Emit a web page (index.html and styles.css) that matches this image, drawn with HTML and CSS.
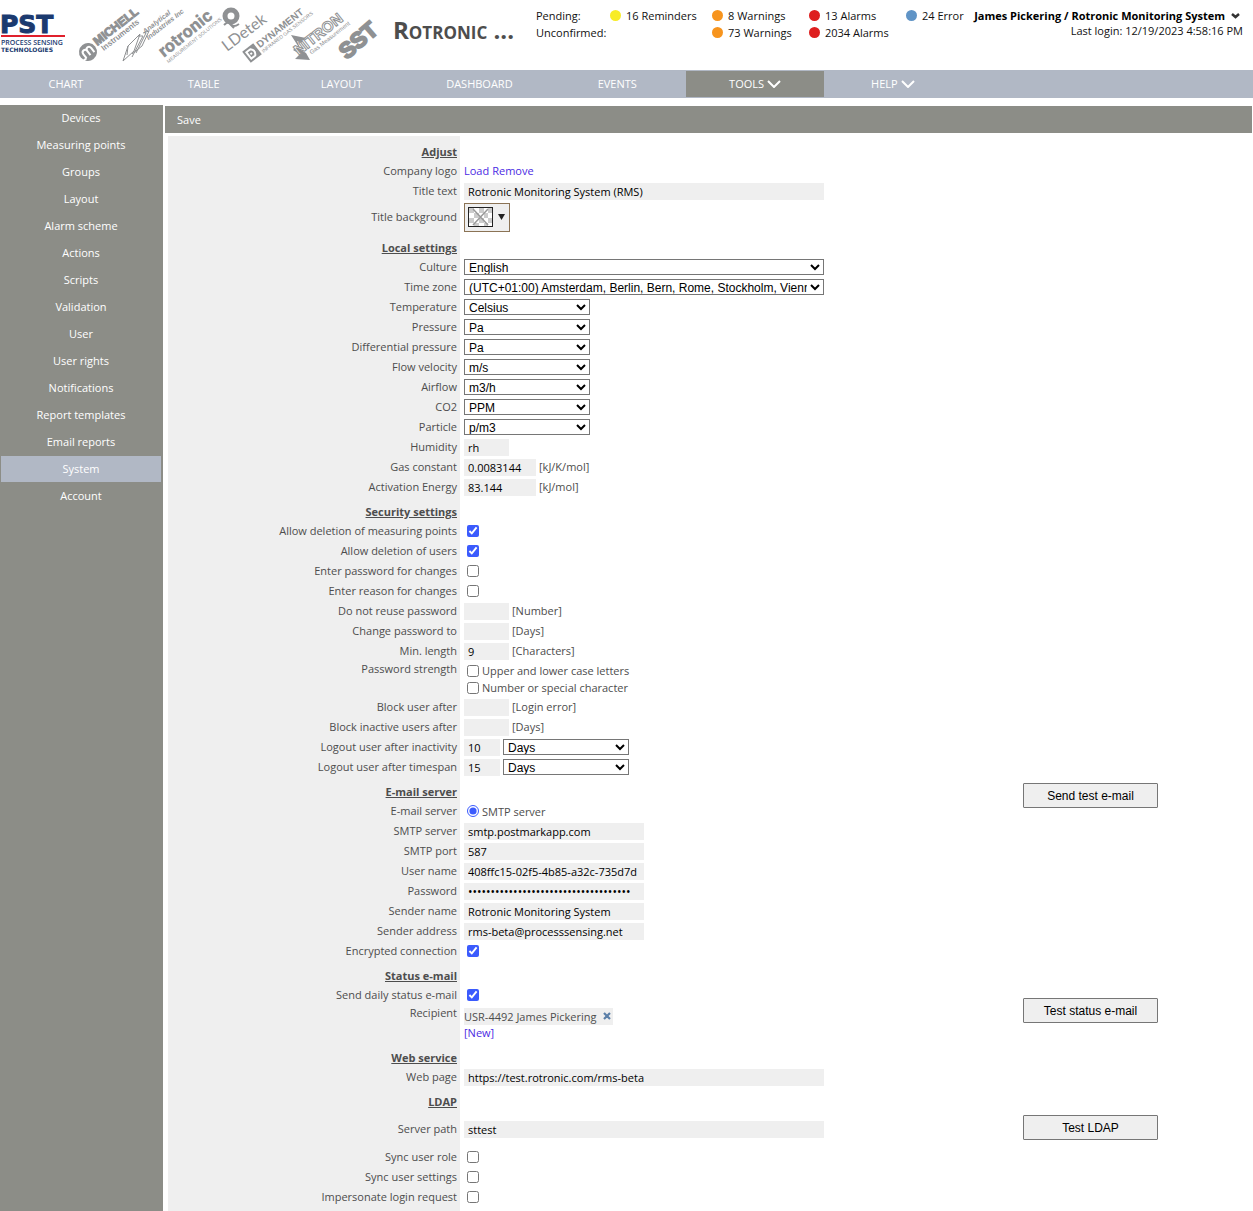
FILE: index.html
```html
<!DOCTYPE html>
<html lang="en">
<head>
    <meta charset="UTF-8">
    <meta name="viewport" content="width=device-width, initial-scale=1.0">
    <title>Rotronic Monitoring System</title>
    <link rel="stylesheet" href="styles.css">
</head>
<body>
    <header class="header">
        <svg class="brands" width="393" height="70" viewBox="0 0 393 70" role="img" aria-label="Process Sensing Technologies brands">
            <!-- PST -->
            <g class="pst">
                <text class="pst-name" x="0" y="33">PST</text>
                <rect class="pst-line" x="1" y="35" width="64" height="2"/>
                <text class="pst-sub" x="1" y="45">PROCESS SENSING</text>
                <text class="pst-tech" x="1" y="52">TECHNOLOGIES</text>
            </g>
            <!-- Michell -->
            <g transform="translate(88 52) rotate(-38)">
                <circle r="9"/>
                <path class="cut" d="M-5 4v-5q0-3 2.500-3T0-1v5M0-1q0-3 2.500-3T5-1v5M-9 4h4"/>
                <text class="heavy michell" x="11" y="1" font-size="12">MICHELL</text>
                <text class="heavy" x="13" y="9" font-size="8">Instruments</text>
            </g>
            <!-- Analytical Industries -->
            <path class="thin" d="M123 61l5-15 12-12-6 17zM128 46l-1 9M138 36h5l-11 21M143 33l6-2-7 15-10 8M146 33l-10 20"/>
            <g transform="translate(145 34) rotate(-38)">
                <text class="heavy italic" x="0" y="0" font-size="7">Analytical</text>
                <text class="heavy italic" x="-1" y="7" font-size="7">Industries Inc</text>
            </g>
            <!-- Rotronic -->
            <g transform="translate(164 58) rotate(-39)">
                <text class="rotronic" x="0" y="0" font-size="18">rotronic</text>
                <text x="0" y="7" font-size="5">MEASUREMENT SOLUTIONS</text>
            </g>
            <!-- LDetek -->
            <circle class="ring" cx="231" cy="16" r="6"/>
            <path class="wave" d="M224 25q5-5 7-1t8 0M228 22l6 6"/>
            <g transform="translate(227 52) rotate(-37)">
                <text class="light" x="0" y="0" font-size="16">LDetek</text>
            </g>
            <!-- Dynament -->
            <g transform="translate(252 53) rotate(-38)">
                <rect x="-7" y="-7" width="14" height="14"/>
                <path class="cut" d="M-4-4h5q4 4 0 8h-5zM-1-1v2"/>
                <text class="heavy" x="9" y="1" font-size="10">DYNAMENT</text>
                <text x="9" y="7" font-size="5">INFRARED GAS SENSORS</text>
            </g>
            <!-- Nitron -->
            <path d="M291 35l15 3-5 5-4-2 4 9 5 3 4 7-15-1 5-5-7-4 5-4z"/>
            <g transform="translate(301 54) rotate(-38)">
                <text class="nitron" x="-3" y="0" font-size="15">NITRON</text>
                <text x="8" y="7" font-size="6">Gas Measurement</text>
            </g>
            <!-- SST -->
            <g transform="translate(347 60) rotate(-41)">
                <text class="sst" x="0" y="0" font-size="22">SST</text>
            </g>
        </svg>

        <h1 class="title">Rotronic ...</h1>

        <div class="status">
            <span>Pending:</span>
            <span><i class="dot yellow"></i>16 Reminders</span>
            <span><i class="dot orange"></i>8 Warnings</span>
            <span><i class="dot red"></i>13 Alarms</span>
            <span><i class="dot blue"></i>24 Error</span>
            <span>Unconfirmed:</span>
            <span></span>
            <span><i class="dot orange"></i>73 Warnings</span>
            <span><i class="dot red"></i>2034 Alarms</span>
        </div>

        <div class="user">
            <button type="button" class="user-name">James Pickering / Rotronic Monitoring System
                <svg width="9" height="6" viewBox="0 0 9 6"><path d="M1 1l3.500 3L8 1" fill="none" stroke="#333" stroke-width="2.500"/></svg>
            </button>
            <div class="last-login">Last login: 12/19/2023 4:58:16 PM</div>
        </div>
    </header>

    <nav class="nav">
        <a href="#">CHART</a>
        <a href="#">TABLE</a>
        <a href="#">LAYOUT</a>
        <a href="#">DASHBOARD</a>
        <a href="#">EVENTS</a>
        <a href="#" class="active">TOOLS <svg width="14" height="8" viewBox="0 0 14 8"><path d="M1 1l6 6 6-6"/></svg></a>
        <a href="#">HELP <svg width="14" height="8" viewBox="0 0 14 8"><path d="M1 1l6 6 6-6"/></svg></a>
    </nav>

    <div class="page">
        <aside class="sidebar">
            <a href="#">Devices</a>
            <a href="#">Measuring points</a>
            <a href="#">Groups</a>
            <a href="#">Layout</a>
            <a href="#">Alarm scheme</a>
            <a href="#">Actions</a>
            <a href="#">Scripts</a>
            <a href="#">Validation</a>
            <a href="#">User</a>
            <a href="#">User rights</a>
            <a href="#">Notifications</a>
            <a href="#">Report templates</a>
            <a href="#">Email reports</a>
            <a href="#" class="active">System</a>
            <a href="#">Account</a>
        </aside>

        <main class="main">
            <div class="toolbar"><button type="submit" form="settings">Save</button></div>

            <form class="settings" id="settings">
                <section class="section">
                    <div class="rows">
                        <h2>Adjust</h2>
                        <div class="row"><span class="label">Company logo</span><div class="field links"><a href="#">Load</a> <a href="#">Remove</a></div></div>
                        <div class="row"><label class="label" for="title-text">Title text</label><div class="field"><input type="text" class="wide" id="title-text" value="Rotronic Monitoring System (RMS)"></div></div>
                        <div class="row color-row">
                            <label class="label" for="title-bg">Title background</label>
                            <div class="field">
                                <button type="button" class="color-picker" id="title-bg" aria-label="Title background">
                                    <svg width="25" height="20" viewBox="0 0 25 20">
                                        <rect x="1" y="1" width="23" height="18" fill="#fff"/>
                                        <path fill="#ccc" d="M1 1h5v5H1zM11 1h5v5h-5zM20 1h4v5h-4zM6 6h5v5H6zM16 6h4v5h-4zM1 11h5v5H1zM11 11h5v5h-5zM20 11h4v5h-4zM6 16h5v3H6zM16 16h4v3h-4z"/>
                                        <path fill="none" stroke="#999" stroke-width="1.500" d="M5 2l15 16M20 2L5 18"/>
                                        <rect x=".5" y=".5" width="24" height="19" fill="none" stroke="#222"/>
                                    </svg>
                                    <svg width="7" height="6" viewBox="0 0 7 6"><path d="M0 0h7L3.500 6z" fill="#222"/></svg>
                                </button>
                            </div>
                        </div>
                    </div>
                </section>

                <section class="section">
                    <div class="rows">
                        <h2>Local settings</h2>
                        <div class="row"><label class="label" for="culture">Culture</label><div class="field"><select class="wide" id="culture"><option>English</option></select></div></div>
                        <div class="row"><label class="label" for="time-zone">Time zone</label><div class="field"><select class="wide" id="time-zone"><option>(UTC+01:00) Amsterdam, Berlin, Bern, Rome, Stockholm, Vienna</option></select></div></div>
                        <div class="row"><label class="label" for="temperature">Temperature</label><div class="field"><select id="temperature"><option>Celsius</option></select></div></div>
                        <div class="row"><label class="label" for="pressure">Pressure</label><div class="field"><select id="pressure"><option>Pa</option></select></div></div>
                        <div class="row"><label class="label" for="diff-pressure">Differential pressure</label><div class="field"><select id="diff-pressure"><option>Pa</option></select></div></div>
                        <div class="row"><label class="label" for="flow">Flow velocity</label><div class="field"><select id="flow"><option>m/s</option></select></div></div>
                        <div class="row"><label class="label" for="airflow">Airflow</label><div class="field"><select id="airflow"><option>m3/h</option></select></div></div>
                        <div class="row"><label class="label" for="co2">CO2</label><div class="field"><select id="co2"><option>PPM</option></select></div></div>
                        <div class="row"><label class="label" for="particle">Particle</label><div class="field"><select id="particle"><option>p/m3</option></select></div></div>
                        <div class="row"><label class="label" for="humidity">Humidity</label><div class="field"><input type="text" class="small" id="humidity" value="rh"></div></div>
                        <div class="row"><label class="label" for="gas">Gas constant</label><div class="field"><input type="text" class="medium" id="gas" value="0.0083144"><span>[kJ/K/mol]</span></div></div>
                        <div class="row"><label class="label" for="activation">Activation Energy</label><div class="field"><input type="text" class="medium" id="activation" value="83.144"><span>[kJ/mol]</span></div></div>
                    </div>
                </section>

                <section class="section">
                    <div class="rows">
                        <h2>Security settings</h2>
                        <div class="row"><label class="label" for="del-points">Allow deletion of measuring points</label><div class="field"><input type="checkbox" id="del-points" checked></div></div>
                        <div class="row"><label class="label" for="del-users">Allow deletion of users</label><div class="field"><input type="checkbox" id="del-users" checked></div></div>
                        <div class="row"><label class="label" for="enter-password">Enter password for changes</label><div class="field"><input type="checkbox" id="enter-password"></div></div>
                        <div class="row"><label class="label" for="enter-reason">Enter reason for changes</label><div class="field"><input type="checkbox" id="enter-reason"></div></div>
                        <div class="row"><label class="label" for="reuse">Do not reuse password</label><div class="field"><input type="text" class="small" id="reuse"><span>[Number]</span></div></div>
                        <div class="row"><label class="label" for="change-to">Change password to</label><div class="field"><input type="text" class="small" id="change-to"><span>[Days]</span></div></div>
                        <div class="row"><label class="label" for="min-length">Min. length</label><div class="field"><input type="text" class="small" id="min-length" value="9"><span>[Characters]</span></div></div>
                        <div class="row multi-row">
                            <span class="label">Password strength</span>
                            <div class="field stacked">
                                <label class="option"><input type="checkbox">Upper and lower case letters</label>
                                <label class="option"><input type="checkbox">Number or special character</label>
                            </div>
                        </div>
                        <div class="row"><label class="label" for="block-after">Block user after</label><div class="field"><input type="text" class="small" id="block-after"><span>[Login error]</span></div></div>
                        <div class="row"><label class="label" for="block-inactive">Block inactive users after</label><div class="field"><input type="text" class="small" id="block-inactive"><span>[Days]</span></div></div>
                        <div class="row"><label class="label" for="inactivity">Logout user after inactivity</label><div class="field"><input type="text" class="tiny" id="inactivity" value="10"><select aria-label="Inactivity unit"><option>Days</option></select></div></div>
                        <div class="row"><label class="label" for="timespan">Logout user after timespan</label><div class="field"><input type="text" class="tiny" id="timespan" value="15"><select aria-label="Timespan unit"><option>Days</option></select></div></div>
                    </div>
                </section>

                <section class="section">
                    <div class="rows">
                        <h2>E-mail server</h2>
                        <div class="row"><span class="label">E-mail server</span><div class="field"><label class="option"><input type="radio" name="server" checked>SMTP server</label></div></div>
                        <div class="row"><label class="label" for="smtp">SMTP server</label><div class="field"><input type="text" class="half" id="smtp" value="smtp.postmarkapp.com"></div></div>
                        <div class="row"><label class="label" for="port">SMTP port</label><div class="field"><input type="text" class="half" id="port" value="587"></div></div>
                        <div class="row"><label class="label" for="user-name">User name</label><div class="field"><input type="text" class="half" id="user-name" value="408ffc15-02f5-4b85-a32c-735d7d"></div></div>
                        <div class="row"><label class="label" for="password">Password</label><div class="field"><input type="password" class="half" id="password" value="postmark-server-token-0123456789-abc"></div></div>
                        <div class="row"><label class="label" for="sender-name">Sender name</label><div class="field"><input type="text" class="half" id="sender-name" value="Rotronic Monitoring System"></div></div>
                        <div class="row"><label class="label" for="sender-address">Sender address</label><div class="field"><input type="text" class="half" id="sender-address" value="rms-beta@processsensing.net"></div></div>
                        <div class="row"><label class="label" for="encrypted">Encrypted connection</label><div class="field"><input type="checkbox" id="encrypted" checked></div></div>
                    </div>
                    <div class="side"><button type="button" class="button">Send test e-mail</button></div>
                </section>

                <section class="section">
                    <div class="rows">
                        <h2>Status e-mail</h2>
                        <div class="row"><label class="label" for="daily">Send daily status e-mail</label><div class="field"><input type="checkbox" id="daily" checked></div></div>
                        <div class="row multi-row recipient-row">
                            <span class="label">Recipient</span>
                            <div class="field stacked links">
                                <span class="tag">USR-4492 James Pickering
                                    <button type="button" class="remove" aria-label="Remove recipient"><svg width="8" height="8" viewBox="0 0 8 8"><path d="M1 1l6 6M7 1L1 7" stroke="#5b7fa8" stroke-width="2.200"/></svg></button>
                                </span>
                                <a href="#">[New]</a>
                            </div>
                        </div>
                    </div>
                    <div class="side side-bottom"><button type="button" class="button">Test status e-mail</button></div>
                </section>

                <section class="section">
                    <div class="rows">
                        <h2>Web service</h2>
                        <div class="row"><label class="label" for="web-page">Web page</label><div class="field"><input type="text" class="wide" id="web-page" value="https://test.rotronic.com/rms-beta"></div></div>
                    </div>
                </section>

                <section class="section">
                    <div class="rows">
                        <h2>LDAP</h2>
                        <div class="row path-row"><label class="label" for="path">Server path</label><div class="field"><input type="text" class="wide" id="path" value="sttest"></div></div>
                        <div class="row"><label class="label" for="sync-role">Sync user role</label><div class="field"><input type="checkbox" id="sync-role"></div></div>
                        <div class="row"><label class="label" for="sync-settings">Sync user settings</label><div class="field"><input type="checkbox" id="sync-settings"></div></div>
                        <div class="row"><label class="label" for="impersonate">Impersonate login request</label><div class="field"><input type="checkbox" id="impersonate"></div></div>
                    </div>
                    <div class="side side-ldap"><button type="button" class="button">Test LDAP</button></div>
                </section>
            </form>
        </main>
    </div>
</body>
</html>
```
FILE: styles.css
```css
* {
    box-sizing: border-box;
}

body {
    margin: 0;
    min-height: 100vh;
    display: flex;
    flex-direction: column;
    font-family: "Open Sans", "Segoe UI", sans-serif;
    font-size: 11px;
    line-height: 16px;
    color: #4d4d4d;
    background: #fff;
    overflow-x: hidden;
}

a {
    text-decoration: none;
}

button,
input {
    font: inherit;
}

/* Header */
.header {
    display: flex;
    align-items: flex-start;
    height: 70px;
    padding-right: 10px;
    color: #111;
}

.brands {
    flex: none;
    fill: #8f9193;
    font-family: "Liberation Sans", Arial, sans-serif;
}

.pst {
    fill: #1b3a6f;
}

.pst-name {
    font: bold 25px "DejaVu Sans", sans-serif;
    stroke: #1b3a6f;
}

.pst-line {
    fill: #e0202c;
}

.pst-sub {
    font-family: "Open Sans", sans-serif;
    font-size: 7px;
    font-weight: 600;
}

.pst-tech {
    font: bold 6px "DejaVu Sans", sans-serif;
}

.heavy {
    font-weight: bold;
}

.michell {
    stroke: #8f9193;
}

.italic {
    font-style: italic;
}

.rotronic {
    font-family: Roboto, sans-serif;
    font-weight: 900;
}

.light {
    font-family: Lato, sans-serif;
    stroke: none;
}

.nitron {
    font-weight: bold;
    fill: #fff;
    stroke: #8f9193;
}

.sst {
    font-weight: bold;
    stroke: #8f9193;
    stroke-width: 2;
}

.cut {
    fill: none;
    stroke: #fff;
    stroke-width: 2;
}

.thin {
    fill: none;
    stroke: #8f9193;
}

.ring {
    fill: none;
    stroke: #8f9193;
    stroke-width: 5;
}

.wave {
    fill: none;
    stroke: #8f9193;
    stroke-width: 2;
}

.title {
    flex: none;
    width: 143px;
    margin: 14px 0 0;
    font-size: 24px;
    line-height: 32px;
    font-variant: small-caps;
    color: #4d4d4d;
    white-space: nowrap;
}

.status {
    flex: none;
    display: grid;
    grid-template-columns: 74px 102px 97px 97px 60px;
    grid-auto-rows: 17px;
    padding-top: 7px;
    white-space: nowrap;
}

.status span {
    display: flex;
    align-items: center;
    gap: 5px;
}

.dot {
    width: 11px;
    height: 11px;
    border-radius: 50%;
}

.yellow {
    background: #f8ec25;
}

.orange {
    background: #f7941d;
}

.red {
    background: #de1f1f;
}

.blue {
    background: #6094c6;
}

.user {
    margin-left: auto;
    padding-top: 8px;
    text-align: right;
    white-space: nowrap;
}

.user-name {
    display: flex;
    align-items: center;
    justify-content: flex-end;
    gap: 6px;
    width: 100%;
    padding: 0 3px 0 0;
    border: 0;
    background: none;
    font-weight: bold;
    line-height: 15px;
    color: #000;
    cursor: pointer;
}

.last-login {
    line-height: 15px;
}

/* Main navigation */
.nav {
    display: flex;
    height: 28px;
    padding: 1px 0;
    background: #b1b8c5;
}

.nav a {
    flex: 0 0 11%;
    display: flex;
    align-items: center;
    justify-content: center;
    gap: 3px;
    color: #fff;
}

.nav a:first-child {
    margin-left: -3px;
}

.nav a.active {
    background: #8c8d87;
}

.nav path {
    fill: none;
    stroke: #fff;
    stroke-width: 2;
}

/* Page */
.page {
    flex: 1;
    display: flex;
    gap: 2px;
    padding: 7px 1px 0 0;
}

.sidebar {
    flex: 0 0 163px;
    display: flex;
    flex-direction: column;
    padding: 0 2px 0 1px;
    background: #8c8d87;
}

.sidebar a {
    line-height: 26px;
    margin-bottom: 1px;
    text-align: center;
    color: #fff;
}

.sidebar a.active {
    background: #b1b8c5;
}

.main {
    flex: 1;
    display: flex;
    flex-direction: column;
    padding-top: 1px;
}

.toolbar {
    display: flex;
    height: 27px;
    padding-left: 12px;
    background: #8c8d87;
}

.toolbar button {
    padding: 0;
    border: 0;
    background: none;
    color: #fff;
    cursor: pointer;
}

/* Settings form */
.settings {
    flex: 1;
    margin: 3px 0 0 3px;
    padding-top: 1px;
    background: linear-gradient(to right, #efefef 292px, #fff 292px);
}

.section {
    display: flex;
    padding-top: 6px;
}

.rows {
    flex: 1;
}

.section h2 {
    width: 289px;
    margin: 0;
    font-size: 11px;
    line-height: 18px;
    text-align: right;
    text-decoration: underline;
}

.row {
    display: flex;
    gap: 7px;
    min-height: 20px;
}

.label {
    flex: 0 0 289px;
    align-self: center;
    text-align: right;
}

.field {
    flex: 1;
    display: flex;
    align-items: center;
    gap: 3px;
}

.color-row {
    min-height: 32px;
}

.path-row,
.multi-row {
    min-height: 36px;
}

.recipient-row {
    min-height: 38px;
}

.multi-row .label {
    align-self: flex-start;
}

.stacked {
    flex-direction: column;
    align-items: flex-start;
    gap: 0;
    justify-content: center;
}

.option {
    display: flex;
    align-items: center;
    line-height: 17px;
}

.links a {
    color: #4b2be3;
}

.field input[type="text"],
.field input[type="password"] {
    width: 45px;
    height: 17px;
    padding: 0 4px;
    border: 0;
    background: #efefef;
    color: #000;
}

.field input[type="password"] {
    font-size: 12px;
}

.field input.tiny {
    width: 36px;
}

.field input.medium {
    width: 72px;
}

.field input.half {
    width: 180px;
}

.field select {
    width: 126px;
    height: 16px;
    padding: 0;
    border: 1px solid #767676;
    border-radius: 0;
    background: #fff;
    font: 12px "Liberation Sans", Arial, sans-serif;
    color: #000;
}

.field input.wide,
.field select.wide {
    width: 360px;
}

input[type="checkbox"],
input[type="radio"] {
    width: 12px;
    height: 12px;
    margin: 0 3px;
    accent-color: #3b5bfd;
}

.color-picker {
    display: flex;
    align-items: center;
    gap: 5px;
    width: 46px;
    height: 29px;
    padding: 0 3px;
    border: 1px solid #8b7355;
    background: #efefef;
}

.tag {
    display: flex;
    align-items: center;
    gap: 6px;
    padding: 0 2px 0 0;
    line-height: 17px;
    background: #efefef;
}

.remove {
    display: flex;
    padding: 0;
    border: 0;
    background: none;
}

.side {
    flex: 0 0 229px;
}

.side-bottom {
    align-self: flex-end;
    padding-bottom: 20px;
}

.side-ldap {
    padding-top: 22px;
}

.button {
    display: block;
    width: 135px;
    height: 25px;
    border: 1px solid #767676;
    border-radius: 1px;
    background: #efefef;
    font: 12px "Liberation Sans", Arial, sans-serif;
    color: #000;
}
```
